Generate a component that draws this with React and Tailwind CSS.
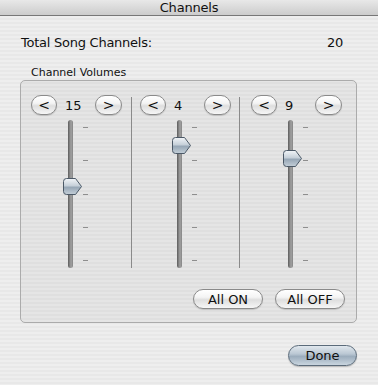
const STRIPES =
  "bg-[repeating-linear-gradient(to_bottom,#eeeeee_0px,#eeeeee_2px,#e8e8e8_2px,#e8e8e8_4px)]";

const channels = [
  { value: 15, thumbTop: 58, pad: "pl-[10px]", width: "w-[110px]" },
  { value: 4, thumbTop: 17, pad: "pl-[8px]", width: "w-[107px]" },
  { value: 9, thumbTop: 30, pad: "pl-[11px]", width: "flex-1" },
];

const AquaButton = ({ children, className = "" }) => (
  <button
    className={`flex items-center justify-center rounded-full border border-[#8a8a8a] bg-[linear-gradient(to_bottom,#ffffff_0%,#f4f4f4_40%,#dedede_55%,#f6f6f6_100%)] shadow-[0_1px_1px_rgba(0,0,0,0.15)] text-[13px] leading-none text-[#111] ${className}`}
  >
    {children}
  </button>
);

const Thumb = () => (
  <svg width="19" height="17" viewBox="0 0 19 17">
    <defs>
      <linearGradient id="thumbFill" x1="0" y1="0" x2="0" y2="1">
        <stop offset="0" stopColor="#f2f5f8" />
        <stop offset="0.45" stopColor="#c6d0d9" />
        <stop offset="0.55" stopColor="#97a7b6" />
        <stop offset="1" stopColor="#c4cfd8" />
      </linearGradient>
    </defs>
    <path
      d="M3.5 0.5 H12.5 L18.5 8.5 L12.5 16.5 H3.5 Q0.5 16.5 0.5 13.5 V3.5 Q0.5 0.5 3.5 0.5 Z"
      fill="url(#thumbFill)"
      stroke="#4b5866"
    />
  </svg>
);

const ChannelColumn = ({ value, thumbTop, pad, width }) => (
  <div className={`${width} ${pad} flex flex-col`}>
    <div className="flex items-center h-[20px]">
      <AquaButton className="w-[26px] h-[20px] text-[14px]">&lt;</AquaButton>
      <span className="w-[38px] pl-[8px] text-[13px] leading-none">{value}</span>
      <AquaButton className="w-[27px] h-[20px] text-[14px]">&gt;</AquaButton>
    </div>
    <div className="flex mt-[5px] h-[148px]">
      <div className="relative ml-[37px] w-[5px] h-full rounded-full bg-[linear-gradient(to_right,#5c5c5c,#a2a2a2_60%,#858585)]">
        <div className="absolute left-[-5px]" style={{ top: thumbTop }}>
          <Thumb />
        </div>
      </div>
      <div className="ml-[10px] py-[7px] flex flex-col justify-between">
        {[0, 1, 2, 3, 4].map((i) => (
          <div key={i} className="w-[5px] h-px bg-[#8e8e8e]" />
        ))}
      </div>
    </div>
  </div>
);

export default function App() {
  return (
    <div
      className={`w-[378px] h-[385px] flex flex-col ${STRIPES} text-[#111] font-['Lucida_Grande','DejaVu_Sans',sans-serif]`}
    >
      <div className="h-[16px] border-b border-[#777777] bg-[linear-gradient(to_bottom,#e8e8e8,#cccccc)] text-center text-[13px] leading-[15px] tracking-[-0.2px]">
        Channels
      </div>

      <div className="mt-[19px] pl-[21px] pr-[35px] flex justify-between text-[13px] leading-[16px] tracking-[-0.25px]">
        <span>Total Song Channels:</span>
        <span>20</span>
      </div>

      <div className="mt-[15px] pl-[31px] text-[11px] leading-[13px]">Channel Volumes</div>

      <div className="mt-[1px] ml-[20px] w-[337px] h-[243px] rounded-[5px] border border-[#ababab] bg-black/[0.035] flex flex-col">
        <div className="mt-[14px] flex">
          <ChannelColumn {...channels[0]} />
          <div className="w-px mt-[2px] bg-[#8a8a8a]" />
          <ChannelColumn {...channels[1]} />
          <div className="w-px mt-[2px] bg-[#8a8a8a]" />
          <ChannelColumn {...channels[2]} />
        </div>
        <div className="mt-[21px] pr-[11px] flex justify-end gap-[12px]">
          <AquaButton className="w-[70px] h-[20px]">All ON</AquaButton>
          <AquaButton className="w-[70px] h-[20px]">All OFF</AquaButton>
        </div>
      </div>

      <div className="mt-[22px] pr-[21px] flex justify-end">
        <button className="w-[69px] h-[21px] rounded-full border border-[#5b6b7a] bg-[linear-gradient(to_bottom,#e1e8ee_0%,#bac7d3_42%,#9cadbd_55%,#c9d5df_100%)] shadow-[0_1px_1px_rgba(0,0,0,0.2)] text-[13px] leading-none text-[#111]">
          Done
        </button>
      </div>
    </div>
  );
}
